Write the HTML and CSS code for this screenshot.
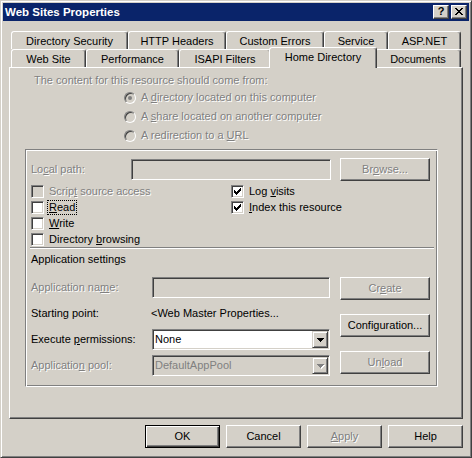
FILE: index.html
```html
<!DOCTYPE html>
<html>
<head>
<meta charset="utf-8">
<title>Web Sites Properties</title>
<link rel="stylesheet" href="styles.css">
</head>
<body>
<div class="window">
  <div class="titlebar">
    <span class="title">Web Sites Properties</span>
    <div class="caption-buttons">
      <span class="cap-btn cap-help">?</span>
      <span class="cap-btn cap-close"><svg width="8" height="7" viewBox="0 0 8 7" shape-rendering="crispEdges"><path fill="#000" d="M0 0h2v1h-2z M6 0h2v1h-2z M1 1h2v1h-2z M5 1h2v1h-2z M2 2h4v1h-4z M3 3h2v1h-2z M2 4h4v1h-4z M1 5h2v1h-2z M5 5h2v1h-2z M0 6h2v1h-2z M6 6h2v1h-2z"/></svg></span>
    </div>
  </div>
  <div class="client">
    <div class="tabs">
      <div class="tab-row">
        <div class="tab w-dirsec">Directory Security</div>
        <div class="tab w-http">HTTP Headers</div>
        <div class="tab w-errors">Custom Errors</div>
        <div class="tab w-service">Service</div>
        <div class="tab w-aspnet">ASP.NET</div>
      </div>
      <div class="tab-row">
        <div class="tab w-website">Web Site</div>
        <div class="tab w-perf">Performance</div>
        <div class="tab w-isapi">ISAPI Filters</div>
        <div class="tab w-home selected">Home Directory</div>
        <div class="tab w-docs">Documents</div>
      </div>
    </div>
    <div class="panel">
      <div class="intro disabled">The content for this resource should come from:</div>
      <div class="radio-group">
        <div class="radio-row disabled"><span class="radio"><span class="dot"></span></span><span>A <u>d</u>irectory located on this computer</span></div>
        <div class="radio-row disabled"><span class="radio"></span><span>A <u>s</u>hare located on another computer</span></div>
        <div class="radio-row disabled"><span class="radio"></span><span>A redirection to a <u>U</u>RL</span></div>
      </div>
      <div class="groupbox">
        <div class="path-row">
          <span class="label path-label disabled">Lo<u>c</u>al path:</span>
          <span class="field path-field"></span>
          <span class="btn side-btn disabled">Br<u>o</u>wse...</span>
        </div>
        <div class="checks">
          <div class="check-col left">
            <div class="check-row disabled"><span class="checkbox off"></span><span>Scrip<u>t</u> source access</span></div>
            <div class="check-row"><span class="checkbox"></span><span class="focus"><u>R</u>ead</span></div>
            <div class="check-row"><span class="checkbox"></span><span><u>W</u>rite</span></div>
            <div class="check-row"><span class="checkbox"></span><span>Directory <u>b</u>rowsing</span></div>
          </div>
          <div class="check-col">
            <div class="check-row"><span class="checkbox"><svg width="7" height="7" viewBox="0 0 7 7" shape-rendering="crispEdges"><path fill="#000" d="M6 0h1v1h-1z M5 1h2v1h-2z M0 2h1v1h-1z M4 2h3v1h-3z M0 3h2v1h-2z M3 3h3v1h-3z M0 4h5v1h-5z M1 5h3v1h-3z M2 6h1v1h-1z"/></svg></span><span>Log <u>v</u>isits</span></div>
            <div class="check-row"><span class="checkbox"><svg width="7" height="7" viewBox="0 0 7 7" shape-rendering="crispEdges"><path fill="#000" d="M6 0h1v1h-1z M5 1h2v1h-2z M0 2h1v1h-1z M4 2h3v1h-3z M0 3h2v1h-2z M3 3h3v1h-3z M0 4h5v1h-5z M1 5h3v1h-3z M2 6h1v1h-1z"/></svg></span><span><u>I</u>ndex this resource</span></div>
          </div>
        </div>
        <div class="separator"></div>
        <div class="app-heading">Application settings</div>
        <div class="app-settings">
          <div class="app-fields">
            <div class="app-row"><span class="label app-label disabled">Application na<u>m</u>e:</span><span class="field app-field"></span></div>
            <div class="app-row"><span class="label app-label">Starting point:</span><span class="app-value">&lt;Web Master Properties...</span></div>
            <div class="app-row"><span class="label app-label">Execute <u>p</u>ermissions:</span>
              <span class="combo app-field"><span class="combo-text">None</span><span class="combo-btn"><svg width="7" height="4" viewBox="0 0 7 4" shape-rendering="crispEdges"><path fill="#000" d="M0 0h7v1h-7z M1 1h5v1h-5z M2 2h3v1h-3z M3 3h1v1h-1z"/></svg></span></span>
            </div>
            <div class="app-row"><span class="label app-label disabled">Applicatio<u>n</u> pool:</span>
              <span class="combo combo-disabled app-field"><span class="combo-text">DefaultAppPool</span><span class="combo-btn"><svg width="8" height="5" viewBox="0 0 8 5" shape-rendering="crispEdges"><path fill="#fff" d="M1 1h7v1h-7z M2 2h5v1h-5z M3 3h3v1h-3z M4 4h1v1h-1z"/><path fill="#808080" d="M0 0h7v1h-7z M1 1h5v1h-5z M2 2h3v1h-3z M3 3h1v1h-1z"/></svg></span></span>
            </div>
          </div>
          <div class="app-buttons">
            <span class="btn side-btn disabled">Cr<u>e</u>ate</span>
            <span class="btn side-btn">Configuration...</span>
            <span class="btn side-btn disabled">Un<u>l</u>oad</span>
          </div>
        </div>
      </div>
    </div>
    <div class="footer">
      <span class="btn dlg-btn default">OK</span>
      <span class="btn dlg-btn">Cancel</span>
      <span class="btn dlg-btn disabled"><u>A</u>pply</span>
      <span class="btn dlg-btn">Help</span>
    </div>
  </div>
</div>
</body>
</html>
```

FILE: styles.css
```css
html, body {
  margin: 0;
  padding: 0;
}

body {
  background: #d4d0c8;
  font-family: "Liberation Sans", Arial, sans-serif;
  font-size: 11px;
  line-height: 13px;
  color: #000;
}

.window {
  width: 472px;
  height: 458px;
  box-sizing: border-box;
  border: 1px solid;
  border-color: #d4d0c8 #404040 #404040 #d4d0c8;
  box-shadow: inset 1px 1px #fff, inset -1px -1px #808080;
  padding: 2px;
  background: #d4d0c8;
}

/* title bar */
.titlebar {
  height: 18px;
  background: #0a246a;
  display: flex;
  align-items: center;
  padding: 0 2px;
}

.title {
  flex: 1;
  color: #fff;
  font-weight: bold;
  font-size: 11.5px;
}

.caption-buttons {
  display: flex;
  gap: 2px;
}

.cap-btn {
  width: 16px;
  height: 14px;
  box-sizing: border-box;
  border: 1px solid;
  border-color: #fff #404040 #404040 #fff;
  box-shadow: inset -1px -1px #808080;
  background: #d4d0c8;
  display: flex;
  align-items: center;
  justify-content: center;
}

.cap-help {
  font-weight: bold;
  font-size: 11px;
  line-height: 11px;
  padding-bottom: 1px;
}

.cap-close svg {
  display: block;
  margin-bottom: 1px;
}

/* client area */
.client {
  padding: 10px 6px 0 6px;
}

.tabs {
  padding-left: 2px;
}

.tab-row {
  display: flex;
  height: 18px;
}

.tab {
  box-sizing: border-box;
  height: 18px;
  border: 1px solid;
  border-bottom: none;
  border-color: #fff #404040 transparent #fff;
  border-radius: 3px 3px 0 0;
  box-shadow: inset -1px 0 #808080;
  background: #d4d0c8;
  display: flex;
  align-items: center;
  justify-content: center;
  white-space: nowrap;
  padding-top: 1px;
}

.tab.selected {
  height: 21px;
  margin: -2px -2px -1px -2px;
  padding-top: 0;
  padding-bottom: 2px;
  position: relative;
  z-index: 1;
}

.w-dirsec { width: 117px; }
.w-http { width: 98px; }
.w-errors { width: 98px; }
.w-service { width: 64px; }
.w-aspnet { width: 73px; }
.w-website { width: 75px; }
.w-perf { width: 93px; }
.w-isapi { width: 92px; }
.w-home { width: 108px; }
.w-docs { width: 86px; }

/* panel */
.panel {
  box-sizing: border-box;
  height: 352px;
  border: 1px solid;
  border-color: #fff #404040 #404040 #fff;
  box-shadow: inset -1px -1px #808080;
  padding-top: 6px;
}

.disabled {
  color: #808080;
  text-shadow: 1px 1px 0 #fff;
}

.intro {
  margin-left: 24px;
}

.radio-group {
  margin: 1px 0 0 114px;
}

.radio-row {
  height: 19px;
  display: flex;
  align-items: center;
  gap: 5px;
}

.radio {
  width: 12px;
  height: 12px;
  box-sizing: border-box;
  border-radius: 50%;
  border: 1px solid;
  border-color: #808080 #fff #fff #808080;
  box-shadow: inset 1px 1px #404040, inset -1px -1px #d4d0c8;
  background: #d4d0c8;
  display: flex;
  align-items: center;
  justify-content: center;
}

.dot {
  width: 4px;
  height: 4px;
  border-radius: 50%;
  background: #808080;
  box-shadow: none;
}

/* group box */
.groupbox {
  box-sizing: border-box;
  width: 413px;
  height: 238px;
  margin: 4px 0 0 15px;
  border: 1px solid;
  border-color: #808080 #fff #fff #808080;
  box-shadow: inset 1px 1px #fff, inset -1px -1px #808080;
  padding: 8px 5px 0 5px;
}

.path-row {
  display: flex;
  align-items: center;
  height: 23px;
}

.label {
  flex: none;
  white-space: nowrap;
}

.path-label {
  width: 100px;
}

.field {
  box-sizing: border-box;
  height: 21px;
  border: 1px solid;
  border-color: #808080 #fff #fff #808080;
  box-shadow: inset 1px 1px #404040, inset -1px -1px #d4d0c8;
  background: #d4d0c8;
  flex: none;
}

.path-field {
  width: 200px;
}

.btn {
  box-sizing: border-box;
  height: 23px;
  border: 1px solid;
  border-color: #fff #404040 #404040 #fff;
  box-shadow: inset -1px -1px #808080;
  background: #d4d0c8;
  display: flex;
  align-items: center;
  justify-content: center;
  white-space: nowrap;
  flex: none;
}

.side-btn {
  width: 90px;
}

.path-row .side-btn {
  margin-left: 9px;
}

.checks {
  display: flex;
  margin-top: 2px;
}

.check-col {
  display: flex;
  flex-direction: column;
}

.check-col.left {
  width: 200px;
}

.check-row {
  height: 16px;
  display: flex;
  align-items: center;
  gap: 5px;
}

.checkbox {
  width: 13px;
  height: 13px;
  box-sizing: border-box;
  border: 1px solid;
  border-color: #808080 #fff #fff #808080;
  box-shadow: inset 1px 1px #404040, inset -1px -1px #d4d0c8;
  background: #fff;
  display: flex;
  align-items: center;
  justify-content: center;
  flex: none;
}

.checkbox svg {
  display: block;
}

.checkbox.off {
  background: #d4d0c8;
}

.focus {
  outline: 1px dotted #000;
  padding: 0 1px;
  margin-left: -1px;
}

.separator {
  height: 0;
  border-top: 1px solid #808080;
  border-bottom: 1px solid #fff;
  margin: 0 -2px 0 -1px;
}

.app-heading {
  margin-top: 4px;
}

.app-settings {
  display: flex;
  margin-top: 11px;
}

.app-fields {
  display: flex;
  flex-direction: column;
  gap: 5px;
}

.app-row {
  height: 21px;
  display: flex;
  align-items: center;
}

.app-label {
  width: 121px;
}

.app-field {
  width: 178px;
}

.app-value {
  margin-left: -1px;
  white-space: nowrap;
}

.combo {
  box-sizing: border-box;
  height: 21px;
  border: 1px solid;
  border-color: #808080 #fff #fff #808080;
  box-shadow: inset 1px 1px #404040, inset -1px -1px #d4d0c8;
  background: #fff;
  padding: 1px;
  display: flex;
  align-items: center;
  flex: none;
}

.combo-text {
  flex: 1;
  padding-left: 1px;
}

.combo-disabled {
  background: #d4d0c8;
}

.combo-disabled .combo-text {
  color: #808080;
}

.combo-btn {
  width: 16px;
  height: 17px;
  box-sizing: border-box;
  border: 1px solid;
  border-color: #d4d0c8 #404040 #404040 #d4d0c8;
  box-shadow: inset 1px 1px #fff, inset -1px -1px #808080;
  background: #d4d0c8;
  display: flex;
  align-items: center;
  justify-content: center;
}

.combo-btn svg {
  display: block;
}

.combo-disabled .combo-btn svg {
  margin: 1px 0 0 1px;
}

.app-buttons {
  display: flex;
  flex-direction: column;
  gap: 14px;
  margin-left: 10px;
}

/* footer */
.footer {
  display: flex;
  justify-content: flex-end;
  gap: 6px;
  margin-top: 6px;
}

.dlg-btn {
  width: 75px;
}

.dlg-btn.default {
  border-color: #000;
  box-shadow: inset 1px 1px #fff, inset -1px -1px #404040, inset -2px -2px #808080;
}
```
